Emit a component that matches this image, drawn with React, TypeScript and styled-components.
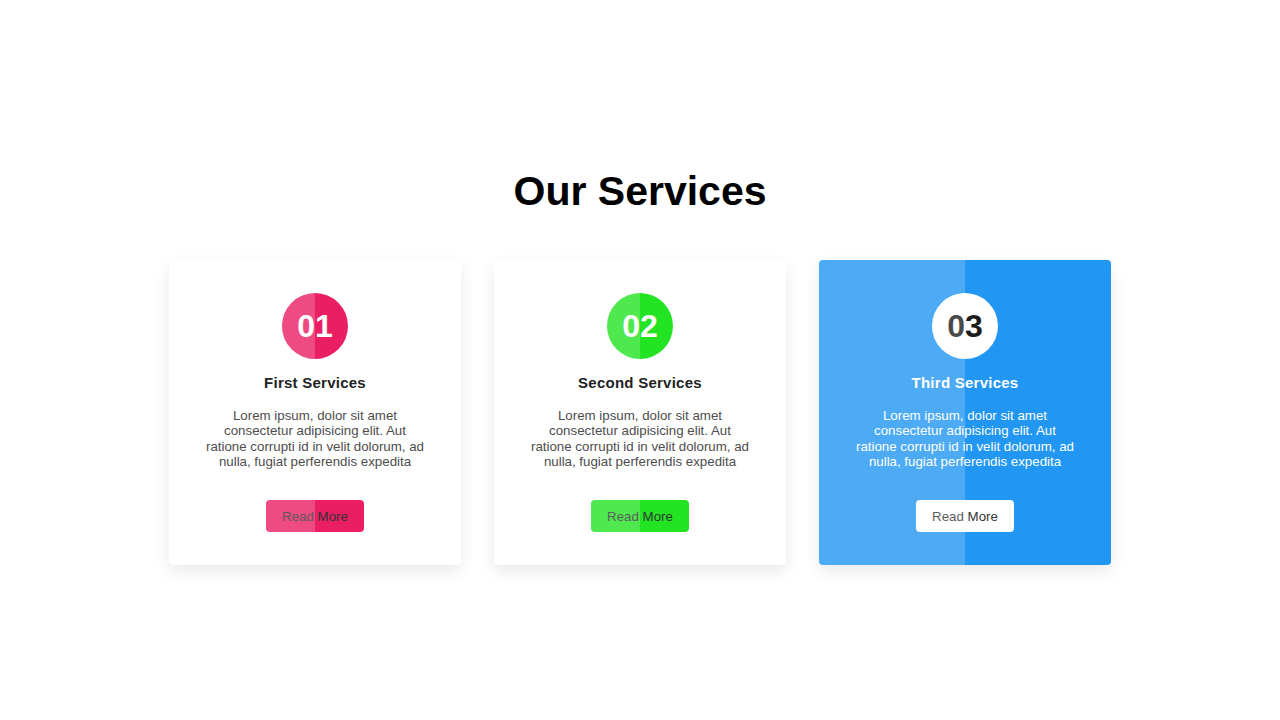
import styled, { createGlobalStyle } from "styled-components"

const GlobalStyle = createGlobalStyle`
* { box-sizing: border-box; }
body {
    margin: 0;
    background: #fff;
    font-family: "Liberation Sans", Arial, sans-serif;
}
`

type serviceType = {
    id: number
    num: string
    title: string
    color: string
    active?: boolean
}

const services: Array<serviceType> = [
    { id: 1, num: "01", title: "First Services", color: "#e91e63" },
    { id: 2, num: "02", title: "Second Services", color: "#23e423" },
    { id: 3, num: "03", title: "Third Services", color: "#2196f3", active: true },
]

const text = "Lorem ipsum, dolor sit amet consectetur adipisicing elit. Aut ratione corrupti id in velit dolorum, ad nulla, fugiat perferendis expedita"

export default function App() {
    return <>
        <GlobalStyle />
        <Section>
            <Heading>Our Services</Heading>
            <Cards>
                {services.map(item =>
                    <Card key={item.id} $color={item.color} $active={item.active}>
                        <Circle $color={item.color} $active={item.active}>{item.num}</Circle>
                        <Title $active={item.active}>{item.title}</Title>
                        <Text $active={item.active}>{text}</Text>
                        <Button $color={item.color} $active={item.active}>Read More</Button>
                    </Card>
                )}
            </Cards>
        </Section>
    </>
}

const Section = styled.section`
min-height: 100vh;
display: flex;
flex-direction: column;
align-items: center;
padding: 168px 0 120px;
`

const Heading = styled.h1`
margin: 0 0 45px;
font-size: 41px;
line-height: 47px;
font-weight: 700;
color: #000;
`

const Cards = styled.div`
display: flex;
gap: 33px;
`

const Card = styled.div<{ $color: string, $active?: boolean }>`
width: 292px;
height: 305px;
padding: 33px 30px;
display: flex;
flex-direction: column;
align-items: center;
border-radius: 4px;
background: ${p => p.$active
    ? `linear-gradient(to right, rgba(255,255,255,0.2) 50%, transparent 50%), ${p.$color}`
    : "#fff"};
box-shadow: 0 6px 16px rgba(0, 0, 0, 0.09);
`

const Circle = styled.div<{ $color: string, $active?: boolean }>`
position: relative;
width: 66px;
height: 66px;
border-radius: 50%;
overflow: hidden;
display: flex;
align-items: center;
justify-content: center;
font-size: 32px;
font-weight: 700;
color: ${p => p.$active ? "#1c1c1c" : "#fff"};
background: ${p => p.$active ? "#fff" : p.$color};
&::after{
    content: '';
    position: absolute;
    top: 0;
    left: 0;
    width: 50%;
    height: 100%;
    background: rgba(255, 255, 255, 0.2);
}
`

const Title = styled.h2<{ $active?: boolean }>`
margin: 15px 0 0;
font-size: 15px;
line-height: 17px;
letter-spacing: 0.25px;
font-weight: 700;
color: ${p => p.$active ? "#fff" : "#222"};
`

const Text = styled.p<{ $active?: boolean }>`
max-width: 222px;
margin: 17px 0 0;
font-size: 13.3px;
line-height: 15.3px;
text-align: center;
color: ${p => p.$active ? "#fff" : "#4d4d4d"};
`

const Button = styled.a<{ $color: string, $active?: boolean }>`
position: relative;
margin-top: auto;
height: 32px;
padding: 0 16px;
display: flex;
align-items: center;
border-radius: 4px;
overflow: hidden;
font-size: 13.3px;
color: #333;
background: ${p => p.$active ? "#fff" : p.$color};
cursor: pointer;
&::after{
    content: '';
    position: absolute;
    top: 0;
    left: 0;
    width: 50%;
    height: 100%;
    background: rgba(255, 255, 255, 0.2);
}
`
